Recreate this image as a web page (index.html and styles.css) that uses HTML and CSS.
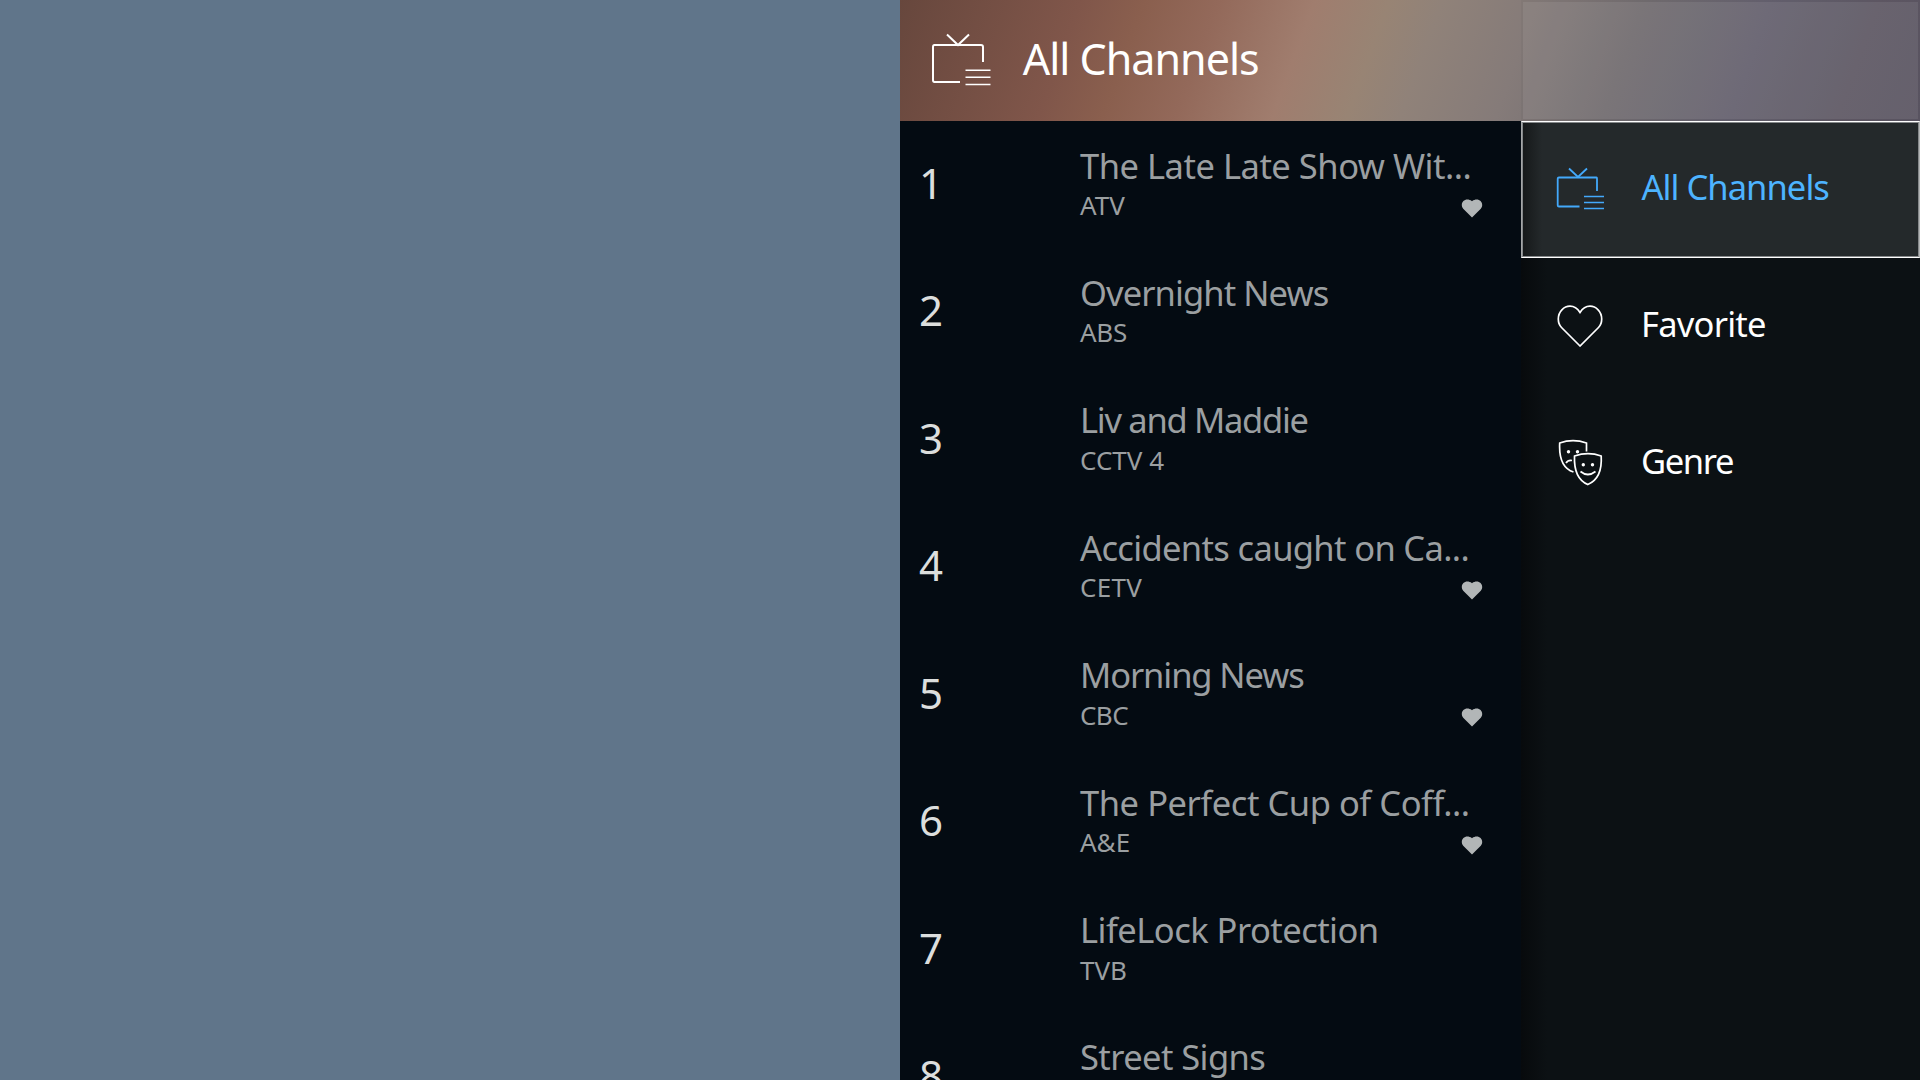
FILE: index.html
```html
<!DOCTYPE html>
<html lang="en">
<head>
<meta charset="utf-8">
<title>All Channels</title>
<link rel="stylesheet" href="styles.css">
</head>
<body>
<div class="screen">
  <div class="preview"></div>
  <main class="panel">
    <header class="header">
      <div class="heading">
        <svg class="heading-icon" viewBox="0 0 60 54" fill="none" stroke="#fff" stroke-width="2">
          <path d="M16 1.500 27 12 38 1.500"/>
          <path d="M29 49H3.500Q2 49 2 47V14Q2 12 3.500 12H50Q52 12 52 14V29"/>
          <path stroke-width="1.600" d="M34.500 37.200H59.500M34.500 44.200H59.500M34.500 51.500H59.500"/>
        </svg>
        <h1 class="title">All Channels</h1>
      </div>
      <div class="header-side"><div class="header-tile"></div></div>
    </header>
    <div class="content">
      <ol class="channels">
        <li class="channel"><span class="number">1</span><div class="info"><span class="program t1">The Late Late Show Wit...</span><span class="name">ATV</span></div><svg class="heart" viewBox="0 0 22 19"><path d="M11 18.500 2.200 9.800C-2 4.500 4-2.600 11 2.200 18-2.600 24 4.500 19.800 9.800Z"/></svg></li>
        <li class="channel"><span class="number">2</span><div class="info"><span class="program t2">Overnight News</span><span class="name n2">ABS</span></div></li>
        <li class="channel"><span class="number">3</span><div class="info"><span class="program t3">Liv and Maddie</span><span class="name">CCTV 4</span></div></li>
        <li class="channel"><span class="number">4</span><div class="info"><span class="program t4">Accidents caught on Ca...</span><span class="name n4">CETV</span></div><svg class="heart" viewBox="0 0 22 19"><path d="M11 18.500 2.200 9.800C-2 4.500 4-2.600 11 2.200 18-2.600 24 4.500 19.800 9.800Z"/></svg></li>
        <li class="channel"><span class="number">5</span><div class="info"><span class="program t5">Morning News</span><span class="name n5">CBC</span></div><svg class="heart" viewBox="0 0 22 19"><path d="M11 18.500 2.200 9.800C-2 4.500 4-2.600 11 2.200 18-2.600 24 4.500 19.800 9.800Z"/></svg></li>
        <li class="channel"><span class="number">6</span><div class="info"><span class="program t6">The Perfect Cup of Coff...</span><span class="name">A&amp;E</span></div><svg class="heart" viewBox="0 0 22 19"><path d="M11 18.500 2.200 9.800C-2 4.500 4-2.600 11 2.200 18-2.600 24 4.500 19.800 9.800Z"/></svg></li>
        <li class="channel"><span class="number">7</span><div class="info"><span class="program t7">LifeLock Protection</span><span class="name">TVB</span></div></li>
        <li class="channel"><span class="number">8</span><div class="info"><span class="program t8">Street Signs</span></div></li>
      </ol>
      <nav class="menu">
        <a class="item selected">
          <svg class="icon" viewBox="0 0 48 44" fill="none" stroke="#43a9fb" stroke-width="1.800">
            <path d="M13 1.500 22 10 31 1.500"/>
            <path d="M23.500 39.500H3Q1.700 39.500 1.700 38.200V11.800Q1.700 10.500 3 10.500H40.500Q41 10.500 41 11.800V24"/>
            <path stroke-width="1.300" d="M28 29.500H48M28 35.500H48M28 41.500H48"/>
          </svg>
          <span class="label">All Channels</span>
        </a>
        <a class="item">
          <svg class="icon" viewBox="0 0 48 44" fill="none" stroke="#fff" stroke-width="1.700">
            <path d="M24 42 5.500 23.500C3 21 2.300 18 2.300 15 2.300 7.500 8 2.200 14 2.200 18.500 2.200 21.500 4.500 24 8.500 26.500 4.500 29.500 2.200 34 2.200 40 2.200 45.700 7.500 45.700 15 45.700 18 45 21 42.500 23.500Z"/>
          </svg>
          <span class="label favorite">Favorite</span>
        </a>
        <a class="item">
          <svg class="icon genre-icon" viewBox="0 0 48 48" fill="none" stroke="#fff" stroke-width="1.700">
            <path d="M30.500 13.500V5C22 2 12 2 3.700 5 3 18 5 30 17.500 34"/>
            <path d="M18.500 18C27 15 37 15 45.200 18 46 31 42.500 42 31.800 46.500 21 42 18 31 18.500 18Z"/>
            <path d="M10 25Q12 21.800 16 22.500M24.500 33.500Q31.800 39.500 39.500 33.500"/>
            <g fill="#fff" stroke="none"><circle cx="12.500" cy="13.800" r="1.700"/><circle cx="21.500" cy="13.800" r="1.700"/><circle cx="27.300" cy="26.800" r="1.700"/><circle cx="36.500" cy="26.800" r="1.700"/></g>
          </svg>
          <span class="label genre">Genre</span>
        </a>
      </nav>
    </div>
  </main>
</div>
</body>
</html>
```
FILE: styles.css
```css
* { box-sizing: border-box; }
body { margin: 0; font-family: "Noto Sans", sans-serif; color: #fff; }
.screen { display: flex; width: 1920px; height: 1080px; overflow: hidden; }
.preview { width: 900px; background: #60758a; }
.panel { width: 1020px; display: flex; flex-direction: column; background: #040b12; }

.header {
  display: flex;
  flex: none;
  height: 121px;
  background: linear-gradient(110deg, #67473d 0%, #80564a 17%, #8a5f4e 23%, #93695a 30%, #a07d6e 39%, #988474 46%, #908279 51%, #857b79 60%, #736e71 70%, #666270 82%, #605966 92%, #5b5664 100%);
}
.heading { display: flex; width: 621px; padding: 33px 0 0 31px; }
.heading-icon { width: 60px; height: 54px; }
.title { margin: -2px 0 0 31.700px; font-size: 43px; font-weight: 400; line-height: 56px; letter-spacing: -0.990px; white-space: nowrap; }
.header-side { width: 399px; padding: 2px; background: rgba(0, 0, 0, 0.030); }
.header-tile { height: 117px; background: rgba(255, 255, 255, 0.080); }

.content { display: flex; height: 959px; overflow: hidden; }
.channels { width: 621px; margin: 0; padding: 0; list-style: none; }
.channel { display: flex; height: 127.430px; }
.number { width: 161px; padding: 33px 0 0 19px; font-size: 42px; line-height: 58px; color: #dcdedd; }
.info { display: flex; flex-direction: column; width: 399.500px; padding-left: 19px; color: #9b9fa1; white-space: nowrap; }
.program { margin-top: 20.500px; font-size: 34.500px; line-height: 47px; }
.name { margin-top: -3.500px; font-size: 26px; line-height: 40px; }
.t1 { letter-spacing: -0.480px; }
.t2 { letter-spacing: -0.910px; }
.t3 { letter-spacing: -1.290px; }
.t4 { letter-spacing: -0.650px; }
.t5 { letter-spacing: -1.100px; }
.t6 { letter-spacing: -0.450px; }
.t7 { letter-spacing: -0.520px; }
.t8 { letter-spacing: -0.580px; }
.n2 { letter-spacing: -0.260px; }
.n4 { letter-spacing: 0.290px; }
.n5 { letter-spacing: -0.600px; }
.heart { width: 22px; height: 19px; margin-top: 77.500px; fill: #b2b6b7; }

.menu { width: 399px; background: linear-gradient(90deg, #070a0c 0, #0c1114 26px); }
.item { display: flex; align-items: center; height: 137px; padding-left: 35px; }
.selected {
  padding-left: 34px;
  border: 1px solid;
  border-color: #fff #b4b6b7 #fff #a5a7a8;
  background: linear-gradient(90deg, #151819 0, #24292b 20px);
  box-shadow: inset 0 0 0 1px #85888a;
}
.icon { width: 48px; height: 44px; margin-top: -1px; }
.genre-icon { height: 48px; margin-top: -3px; }
.label { margin: -5px 0 0 37.400px; font-size: 34.500px; line-height: 48px; letter-spacing: -0.750px; white-space: nowrap; }
.selected .label { letter-spacing: -0.940px; color: #4db3ff; }
.favorite { margin-left: 37px; }
.genre { margin-left: 37px; letter-spacing: -1.360px; }
```
